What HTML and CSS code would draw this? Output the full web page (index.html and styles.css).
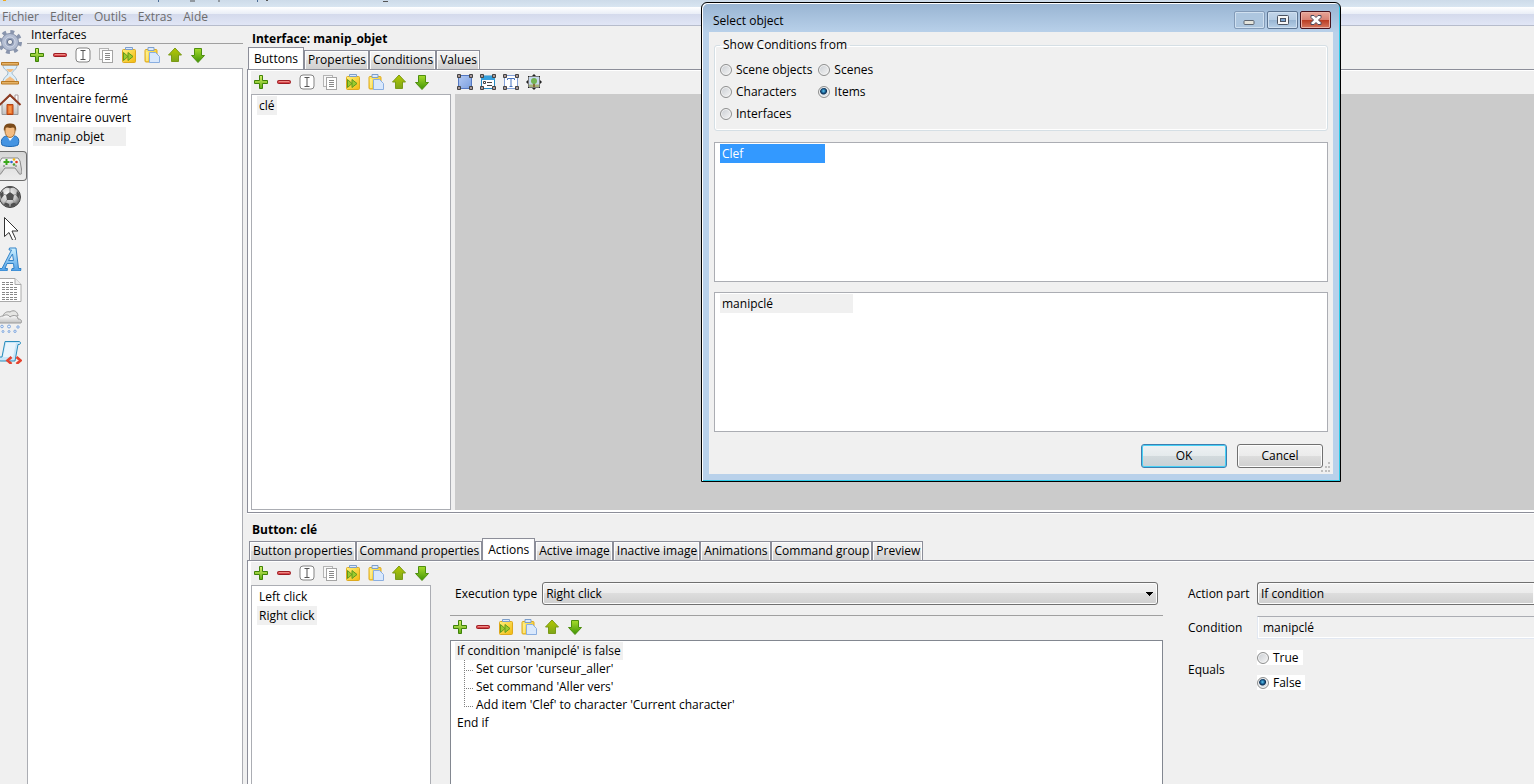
FILE: index.html
```html
<!DOCTYPE html>
<html lang="fr">
<head>
    <meta charset="utf-8">
    <title>Interfaces</title>
    <link rel="stylesheet" href="styles.css">
</head>
<body>
    <!-- Icon shapes shared by the toolbars -->
    <svg class="defs" width="0" height="0" aria-hidden="true">
        <defs>
            <linearGradient id="gGreen" x1="0" y1="0" x2="0" y2="1"><stop offset="0" stop-color="#d6f06a"/><stop offset="1" stop-color="#5fae10"/></linearGradient>
            <linearGradient id="gUp" x1="0" y1="0" x2="0" y2="1"><stop offset="0" stop-color="#b5c800"/><stop offset="1" stop-color="#7da61a"/></linearGradient>
            <linearGradient id="gDown" x1="0" y1="0" x2="0" y2="1"><stop offset="0" stop-color="#a6dc2c"/><stop offset="1" stop-color="#3f9304"/></linearGradient>
            <linearGradient id="gYellow" x1="0" y1="0" x2="1" y2="1"><stop offset="0" stop-color="#fff07a"/><stop offset="1" stop-color="#f2b90e"/></linearGradient>
            <linearGradient id="gBlue" x1="0" y1="0" x2="1" y2="1"><stop offset="0" stop-color="#b3caf4"/><stop offset="1" stop-color="#7b9fdf"/></linearGradient>
            <linearGradient id="gSky" x1="0" y1="0" x2="0" y2="1"><stop offset="0" stop-color="#d0f2ff"/><stop offset="1" stop-color="#4fa0e8"/></linearGradient>
            <linearGradient id="gGrey" x1="0" y1="0" x2="0" y2="1"><stop offset="0" stop-color="#ffffff"/><stop offset="1" stop-color="#c2c2c2"/></linearGradient>
            <radialGradient id="gBall" cx=".4" cy=".35" r=".7"><stop offset="0" stop-color="#ffffff"/><stop offset=".6" stop-color="#c4c4c4"/><stop offset="1" stop-color="#555"/></radialGradient>
        </defs>
        <symbol id="add" viewBox="0 0 16 16"><path d="M6.5 1.5h3v5h5v3h-5v5h-3v-5h-5v-3h5z" fill="url(#gGreen)" stroke="#3f8208" stroke-linejoin="round"/></symbol>
        <symbol id="remove" viewBox="0 0 16 16"><rect x="1.5" y="6.5" width="13" height="3" rx="1" fill="#d8474c" stroke="#9c1c22"/><path d="M3 7.5h10" stroke="#ee8a84"/></symbol>
        <symbol id="rename" viewBox="0 0 16 16"><rect x="1" y="1" width="14" height="14" rx="3" fill="#fff" stroke="#838383"/><path d="M5.5 3.5h5M5.5 12.5h5M8 3.5v9" stroke="#555" fill="none"/></symbol>
        <symbol id="copy" viewBox="0 0 16 16"><rect x="1.5" y="1.5" width="9" height="11" fill="#f8f8f8" stroke="#b4b4b4"/><rect x="4.5" y="3.5" width="10" height="12" fill="#fff" stroke="#a4a4a4"/><path d="M7 6.5h5M7 8.5h5M7 10.5h5M7 12.5h5" stroke="#888"/></symbol>
        <symbol id="duplicate" viewBox="0 0 16 16"><rect x="1.5" y="2.5" width="13" height="13" rx="1" fill="url(#gYellow)" stroke="#dda91e"/><path d="M4.5 2.5v-2h7v2z" fill="#dce9fb" stroke="#7d9fcb"/><path d="M2.5 5.5l4.500 4-4.500 4zM7 5.5l5 4-5 4z" fill="#9ccb2d" stroke="#5f9a1c"/></symbol>
        <symbol id="paste" viewBox="0 0 16 16"><rect x="1" y="2.5" width="12" height="12.5" rx="1" fill="url(#gYellow)" stroke="#dda91e"/><path d="M4 3.5v-3h6v3z" fill="#dce9fb" stroke="#7d9fcb"/><path d="M5.5 5.5h6l4 4v6h-10z" fill="#d9e8fc" stroke="#8aaee0"/><path d="M3 5v9" stroke="#fff6b4"/></symbol>
        <symbol id="up" viewBox="0 0 16 16"><path d="M8 1l6.500 7h-3v6.500h-7V8h-3z" fill="url(#gUp)" stroke="#7b9a16" stroke-linejoin="round"/></symbol>
        <symbol id="down" viewBox="0 0 16 16"><path d="M8 15.5L1.500 8.500h3v-7h7v7h3z" fill="url(#gDown)" stroke="#4f8f10" stroke-linejoin="round"/></symbol>
        <symbol id="handles" viewBox="0 0 16 16"><path d="M.5.5h3v3h-3zM12.500.5h3v3h-3zM.5 12.500h3v3h-3zM12.500 12.500h3v3h-3z" fill="#a99" stroke="#444"/></symbol>
        <symbol id="box" viewBox="0 0 16 16"><rect x="1.5" y="1.5" width="13" height="13" fill="url(#gBlue)" stroke="#5478c2"/><use href="#handles"/></symbol>
        <symbol id="form" viewBox="0 0 16 16"><rect x="1.5" y="2" width="13" height="12.5" fill="#fff" stroke="#248bc4"/><path d="M1 2h14v4H1z" fill="#35a0dd"/><path d="M3.500 7.500h2v2h-2zM7 8.500h5M7 11.500h5" stroke="#444" fill="none"/><use href="#handles"/></symbol>
        <symbol id="textbox" viewBox="0 0 16 16"><rect x="1.5" y="1.5" width="13" height="13" fill="#fff" stroke="#82a0d8"/><path d="M4.500 6V4.500h7V6M8 4.500v7.500M6.500 12.500h3" stroke="#4773c0" fill="none"/><use href="#handles"/></symbol>
        <symbol id="picture" viewBox="0 0 16 16"><rect x="2.5" y="2.5" width="11" height="11" fill="#c6d8ee" stroke="#777"/><path d="M3 10.500h10V13H3z" fill="#a8b47c"/><path d="M7 9h2v4H7z" fill="#8a6c3c"/><circle cx="8" cy="7" r="3" fill="#74b453"/><path d="M8 0l2 2H6zM8 16l2-2H6zM0 8l2-2v4zM16 8l-2-2v4zM2 2h1v1H2zM13 2h1v1h-1zM2 13h1v1H2zM13 13h1v1h-1z" fill="#222"/></symbol>

        <symbol id="gear" viewBox="0 0 24 24"><circle cx="12" cy="12" r="10" fill="none" stroke="#8995ad" stroke-width="4" stroke-dasharray="3.800 4.054"/><circle cx="12" cy="12" r="8.500" fill="#b3bdd2" stroke="#8490a9"/><circle cx="12" cy="12" r="5" fill="#96a2bc" stroke="#d4dbe8"/><circle cx="12" cy="12" r="2.600" fill="#f0f0f0" stroke="#65728c"/></symbol>
        <symbol id="hourglass" viewBox="0 0 24 24"><path d="M5 4h14c0 5-5 6-5 8s5 4 5 9H5c0-5 5-6 5-9S5 9 5 4z" fill="#dceefa" stroke="#9ab4c6"/><path d="M8 8h8l-3 3h-2zM7 20c1-3 4-3 5-5 1 2 4 2 5 5z" fill="#f3bd82"/><path d="M3.500 1.500h17v2.500h-17zM3.500 20.500h17v2.500h-17z" fill="#e5b368" stroke="#b87924"/></symbol>
        <symbol id="house" viewBox="0 0 24 24"><path d="M17 3h3v7h-3z" fill="#fff" stroke="#a99"/><path d="M4 11l8-7 8 7v11.500H4z" fill="url(#gGrey)" stroke="#999"/><path d="M1.500 13L12 3l10.500 10" fill="none" stroke="#8d3c23" stroke-width="2"/><path d="M9 12.500h6v10H9z" fill="#e66a24" stroke="#b34414"/><path d="M10.500 14h3v7h-3z" fill="#f5944a"/></symbol>
        <symbol id="person" viewBox="0 0 24 24"><path d="M4 22c-2-5 1-9 5-9h7c4 0 6 4 4 9-4 2-12 2-16 0z" fill="#4594e2" stroke="#1f68b2"/><path d="M9 13l3 5 4-5z" fill="#f4f8fd"/><ellipse cx="12" cy="8" rx="5" ry="6.500" fill="#f4bc82" stroke="#a87438"/><path d="M6 8C5 3 8 0 12 .5c5-.5 7 3 6 8-1-2-1-4-3-4-3 1-6 0-7 0-1 1-1 2-2 4z" fill="#7b4b1b"/></symbol>
        <symbol id="gamepad" viewBox="0 0 24 24"><path d="M4 4h16l2 3 2 11c0 3-3 3-4 0l-3-4H7l-3 4c-1 3-4 3-4 0L2 7z" fill="url(#gGrey)" stroke="#888"/><path d="M8.500 5v6M5.500 8h6" stroke="#3aa81b" stroke-width="2"/><circle cx="16" cy="5.500" r="1.300" fill="#f0b311"/><circle cx="16" cy="10.500" r="1.300" fill="#4c9f2c"/><circle cx="13.500" cy="8" r="1.300" fill="#2c65d2"/><circle cx="18.500" cy="8" r="1.300" fill="#e2321e"/><path d="M5 12h2M17 12h2" stroke="#666"/></symbol>
        <symbol id="ball" viewBox="0 0 24 24"><circle cx="12" cy="12" r="10.500" fill="url(#gBall)" stroke="#444"/><path d="M8 10l4-3 4 3-1 5H9zM8 2l4 1.500L16 2c-2-1-6-1-8 0zM2 9l3-3 1 4-3 4zM22 9l-3-3-1 4 3 4zM6 20l1-3 4 2v3zM18 20l-1-3-4 2v3z" fill="#505050"/><path d="M12 3v4M8 10l-3-1M16 10l3-1M9 15l-2 3M15 15l2 3" stroke="#999" fill="none"/></symbol>
        <symbol id="cursor" viewBox="0 0 24 24"><path d="M6.500 1.500v19l4.500-4 3.500 7.500c1.500 1 3.500 0 3-1.500L14 15h6z" fill="#fff" stroke="#333"/></symbol>
        <symbol id="letter" viewBox="0 0 24 24"><path d="M1 24l.5-2.500H4L13.500 3H11l.5-2H18l2.500 20.500H23l-.5 2.500h-9l.5-2.500h2l-.5-5H9l-2 5h2.500L9 24zM10.500 13.500h5L14.500 7z" fill="url(#gSky)" stroke="#3283c8" fill-rule="evenodd"/></symbol>
        <symbol id="document" viewBox="0 0 24 24"><path d="M1 .5h16l6 6v17H1z" fill="#fff" stroke="#aaa"/><path d="M17 .5v6h6" fill="#eee" stroke="#aaa"/><path d="M4 4.500h11M4 6.500h11M4 9.500h16M4 11.500h16M4 14.500h16M4 16.500h16M4 19.500h16M4 21.500h16" stroke="#888" stroke-dasharray="3 1"/></symbol>
        <symbol id="weather" viewBox="0 0 24 24"><path d="M5 8c0-4 4-6 7-5 4-3 8 0 8 4z" fill="#e6e6e4" stroke="#999"/><path d="M2 14c-3-3-1-7 3-7 3-2 6-1 7 1 4-3 8-1 8 2 4 0 4 3 3 4z" fill="url(#gGrey)" stroke="#999"/><g fill="#e8f2ff" stroke="#7fa6dc"><circle cx="4" cy="17.500" r="1.300"/><circle cx="11" cy="17.500" r="1.500"/><circle cx="20" cy="18" r="1.200"/><circle cx="5" cy="22.500" r="1"/><circle cx="11" cy="22.500" r="1"/><circle cx="17" cy="22.300" r="1.200"/></g></symbol>
        <symbol id="script" viewBox="0 0 24 24"><path d="M7 1.500h14c2 0 2 3 0 3h-1L17 21H3c-3 0-3-2-1-4h2z" fill="#c8e6f8" stroke="#288dbc" stroke-linejoin="round"/><path d="M8 3h10l-3 14H5z" fill="#fff" opacity=".6"/><path d="M13.500 17l-4 3.500 4 3.500M18.500 17l4 3.500-4 3.500" fill="none" stroke="#e5422e" stroke-width="2.600"/></symbol>
    </svg>

    <header class="titlebar">
        <!-- lower part of the caption line -->
        <svg class="caption" width="420" height="7" viewBox="0 0 420 7" aria-hidden="true">
            <path d="M3 0h3v1h-3z" fill="#f0a81c"/>
            <path d="M158.500 0v2M257.500 0v2" stroke="#4b6c96"/>
            <path d="M190 1h5M218 1h2M266 .5h2M383 1.500h5" stroke="#555"/>
        </svg>
    </header>
    <nav class="menubar">
        <button>Fichier</button>
        <button>Editer</button>
        <button>Outils</button>
        <button>Extras</button>
        <button>Aide</button>
    </nav>

    <div class="workspace">
        <nav class="sidebar">
            <button aria-label="Settings"><svg><use href="#gear"/></svg></button>
            <button aria-label="Time"><svg><use href="#hourglass"/></svg></button>
            <button aria-label="Scenes"><svg><use href="#house"/></svg></button>
            <button aria-label="Characters"><svg><use href="#person"/></svg></button>
            <button class="selected" aria-label="Interfaces"><svg><use href="#gamepad"/></svg></button>
            <button aria-label="Items"><svg><use href="#ball"/></svg></button>
            <button aria-label="Cursors"><svg><use href="#cursor"/></svg></button>
            <button aria-label="Fonts"><svg><use href="#letter"/></svg></button>
            <button aria-label="Texts"><svg><use href="#document"/></svg></button>
            <button aria-label="Particles"><svg><use href="#weather"/></svg></button>
            <button aria-label="Scripts"><svg><use href="#script"/></svg></button>
        </nav>

        <aside class="browser">
            <h2>Interfaces</h2>
            <div class="toolbar">
                <button aria-label="Add"><svg><use href="#add"/></svg></button>
                <button aria-label="Remove"><svg><use href="#remove"/></svg></button>
                <button aria-label="Rename"><svg><use href="#rename"/></svg></button>
                <button aria-label="Copy"><svg><use href="#copy"/></svg></button>
                <button aria-label="Duplicate"><svg><use href="#duplicate"/></svg></button>
                <button aria-label="Paste"><svg><use href="#paste"/></svg></button>
                <button aria-label="Up"><svg><use href="#up"/></svg></button>
                <button aria-label="Down"><svg><use href="#down"/></svg></button>
            </div>
            <ul class="list">
                <li>Interface</li>
                <li>Inventaire fermé</li>
                <li>Inventaire ouvert</li>
                <li class="current w-item">manip_objet</li>
            </ul>
        </aside>

        <main class="editor">
            <section class="group group-top">
                <h1>Interface: manip_objet</h1>
                <div class="tabs">
                    <button class="active">Buttons</button>
                    <button>Properties</button>
                    <button>Conditions</button>
                    <button>Values</button>
                </div>
                <div class="pane">
                    <div class="column buttons-list">
                        <div class="toolbar">
                            <button aria-label="Add"><svg><use href="#add"/></svg></button>
                            <button aria-label="Remove"><svg><use href="#remove"/></svg></button>
                            <button aria-label="Rename"><svg><use href="#rename"/></svg></button>
                            <button aria-label="Copy"><svg><use href="#copy"/></svg></button>
                            <button aria-label="Duplicate"><svg><use href="#duplicate"/></svg></button>
                            <button aria-label="Paste"><svg><use href="#paste"/></svg></button>
                            <button aria-label="Up"><svg><use href="#up"/></svg></button>
                            <button aria-label="Down"><svg><use href="#down"/></svg></button>
                        </div>
                        <ul class="list">
                            <li class="current">clé</li>
                        </ul>
                    </div>
                    <div class="column stage">
                        <div class="toolbar">
                            <button aria-label="Area"><svg><use href="#box"/></svg></button>
                            <button aria-label="Actions area"><svg><use href="#form"/></svg></button>
                            <button aria-label="Text area"><svg><use href="#textbox"/></svg></button>
                            <button aria-label="Image area"><svg><use href="#picture"/></svg></button>
                        </div>
                        <div class="canvas"></div>
                    </div>
                </div>
            </section>

            <section class="group group-bottom">
                <h1>Button: clé</h1>
                <div class="tabs inset">
                    <button>Button properties</button>
                    <button>Command properties</button>
                    <button class="active">Actions</button>
                    <button>Active image</button>
                    <button>Inactive image</button>
                    <button>Animations</button>
                    <button>Command group</button>
                    <button>Preview</button>
                </div>
                <div class="pane">
                    <div class="column actions-list">
                        <div class="toolbar">
                            <button aria-label="Add"><svg><use href="#add"/></svg></button>
                            <button aria-label="Remove"><svg><use href="#remove"/></svg></button>
                            <button aria-label="Rename"><svg><use href="#rename"/></svg></button>
                            <button aria-label="Copy"><svg><use href="#copy"/></svg></button>
                            <button aria-label="Duplicate"><svg><use href="#duplicate"/></svg></button>
                            <button aria-label="Paste"><svg><use href="#paste"/></svg></button>
                            <button aria-label="Up"><svg><use href="#up"/></svg></button>
                            <button aria-label="Down"><svg><use href="#down"/></svg></button>
                        </div>
                        <ul class="list">
                            <li>Left click</li>
                            <li class="current">Right click</li>
                        </ul>
                    </div>

                    <div class="column parts">
                        <div class="execution">
                            <label for="execution">Execution type</label>
                            <select id="execution"><option>Right click</option></select>
                        </div>
                        <div class="toolbar">
                            <button aria-label="Add"><svg><use href="#add"/></svg></button>
                            <button aria-label="Remove"><svg><use href="#remove"/></svg></button>
                            <button aria-label="Duplicate"><svg><use href="#duplicate"/></svg></button>
                            <button aria-label="Paste"><svg><use href="#paste"/></svg></button>
                            <button aria-label="Up"><svg><use href="#up"/></svg></button>
                            <button aria-label="Down"><svg><use href="#down"/></svg></button>
                        </div>
                        <ul class="list tree">
                            <li><span class="current">If condition 'manipclé' is false</span>
                                <ul>
                                    <li>Set cursor 'curseur_aller'</li>
                                    <li>Set command 'Aller vers'</li>
                                    <li>Add item 'Clef' to character 'Current character'</li>
                                </ul>
                            </li>
                            <li><span>End if</span></li>
                        </ul>
                    </div>

                    <form class="details">
                        <label for="part">Action part</label>
                        <select id="part"><option>If condition</option></select>
                        <label for="condition">Condition</label>
                        <input type="text" id="condition" value="manipclé" readonly>
                        <span id="equals">Equals</span>
                        <div class="choices" role="radiogroup" aria-labelledby="equals">
                            <label><input type="radio" name="equals"> True</label>
                            <label><input type="radio" name="equals" checked> False</label>
                        </div>
                    </form>
                </div>
            </section>
        </main>
    </div>

    <!-- Select object window -->
    <div class="dialog" role="dialog" aria-labelledby="dialogTitle">
        <div class="dialog-title">
            <span id="dialogTitle">Select object</span>
            <div class="window-buttons">
                <button class="minimize" aria-label="Minimize"><svg width="13" height="9" viewBox="0 0 13 9"><rect x="1" y="4.5" width="10" height="4" rx="1" fill="#e4e4dc" stroke="#5e6672"/></svg></button>
                <button aria-label="Maximize"><svg width="12" height="10" viewBox="0 0 12 10"><rect x=".5" y=".5" width="11" height="9" rx="1" fill="#f6f6f6" stroke="#4a5260"/><rect x="3.5" y="3.5" width="5" height="3" fill="#7ba3d0" stroke="#4a5260"/></svg></button>
                <button class="close" aria-label="Close"><svg width="12" height="10" viewBox="0 0 12 10"><path d="M1 .5h3l2 2 2-2h3v2L8.500 5 11 7.500v2H8l-2-2-2 2H1v-2L3.500 5 1 2.500z" fill="#fff" stroke="#4a4a5c"/></svg></button>
            </div>
        </div>
        <div class="dialog-body">
            <fieldset>
                <legend>Show Conditions from</legend>
                <div class="sources">
                    <label><input type="radio" name="source"> Scene objects</label>
                    <label><input type="radio" name="source"> Scenes</label>
                    <label><input type="radio" name="source"> Characters</label>
                    <label><input type="radio" name="source" checked> Items</label>
                    <label><input type="radio" name="source"> Interfaces</label>
                </div>
            </fieldset>
            <ul class="list">
                <li class="picked">Clef</li>
            </ul>
            <ul class="list">
                <li class="current w-condition">manipclé</li>
            </ul>
            <div class="dialog-actions">
                <button class="default">OK</button>
                <button>Cancel</button>
            </div>
        </div>
        <svg class="grip" width="10" height="10" viewBox="0 0 10 10" aria-hidden="true"><path d="M7 0h2v2H7zM4 4h2v2H4zM7 4h2v2H7zM0 8h2v2H0zM4 8h2v2H4zM7 8h2v2H7z" fill="#bfbfbf"/></svg>
    </div>
</body>
</html>
```
FILE: styles.css
```css
* {
    box-sizing: border-box;
}

body {
    margin: 0;
    height: 100vh;
    overflow: hidden;
    display: flex;
    flex-direction: column;
    position: relative;
    background-color: #f0f0f0;
    color: #000;
    font: 12px/16px "Open Sans", "Noto Sans", sans-serif;
}

button, input, select {
    font: inherit;
    color: inherit;
    margin: 0;
}

button {
    padding: 0;
    border: none;
    background: none;
}

svg {
    display: block;
}

.defs {
    position: absolute;
}

h1, h2 {
    margin: 0;
    font-size: 12px;
    line-height: 18px;
}

/* top bars */
.titlebar {
    height: 7px;
    flex: none;
    background: linear-gradient(#cddbe9, #d8e5f1);
}

.menubar {
    flex: none;
    height: 19px;
    display: flex;
    gap: 11px;
    padding: 0 2px;
    background: linear-gradient(#fff, #e9eef7 7px, #d4daec 7px, #e1e6f6);
    border-bottom: 1px solid #b6bccc;
    color: #6d6d6d;
    line-height: 20px;
}

.workspace {
    flex: 1;
    min-height: 0;
    display: flex;
}

/* left icon bar */
.sidebar {
    flex: none;
    width: 27px;
    overflow: hidden;
}

    .sidebar button {
        display: flex;
        align-items: center;
        width: 27px;
        height: 31px;
    }

    .sidebar svg {
        width: 24px;
        height: 24px;
        margin-left: -2px;
    }

    .sidebar .selected {
        height: 30px;
        margin: 1px 0 0;
        border: 1px solid #6d6d6d;
        border-left: none;
        border-radius: 0 4px 4px 0;
        background: linear-gradient(#d6d6d6, #ececec);
    }

/* lists and toolbars */
.toolbar {
    flex: none;
    display: flex;
    height: 23px;
    margin-left: -2px;
    padding-bottom: 2px;
}

    .toolbar button {
        flex: none;
        width: 23px;
        display: flex;
        align-items: center;
        justify-content: center;
    }

    .toolbar svg {
        width: 16px;
        height: 16px;
    }

.list {
    flex: 1;
    margin: 0;
    padding: 1px 5px;
    list-style: none;
    background-color: #fff;
    border: 1px solid #abadb3;
}

    .list > li {
        width: fit-content;
        height: 19px;
        line-height: 19px;
        padding: 0 2px;
    }

    .list .current {
        background-color: #f0f0f0;
    }

    .list .w-item {
        min-width: 93px;
    }

    .list .w-condition {
        min-width: 133px;
    }

    .list .picked {
        min-width: 105px;
        background-color: #3399ff;
        color: #fff;
    }

.browser {
    flex: none;
    width: 216px;
    display: flex;
    flex-direction: column;
}

    .browser h2 {
        height: 18px;
        padding-left: 4px;
        border-bottom: 1px solid #a0a0a0;
        font-weight: normal;
    }

    .browser .toolbar {
        height: 24px;
    }

    .browser .list {
        border-bottom: none;
    }

/* editor */
.editor {
    flex: 1;
    min-width: 0;
    margin-left: 4px;
    display: flex;
    flex-direction: column;
}

.group {
    display: flex;
    flex-direction: column;
    min-height: 0;
}

.group-top {
    flex: 483 1 0;
    padding-top: 4px;
}

.group-bottom {
    flex: 263 1 0;
    padding-top: 8px;
}

.group h1 {
    padding-left: 5px;
}

.tabs {
    display: flex;
    align-items: flex-end;
    height: 22px;
    margin-bottom: -1px;
    padding-left: 1px;
}

    .tabs button {
        height: 20px;
        padding: 0 2px 0 3px;
        border: 1px solid #8c8e99;
        background: linear-gradient(#f4f4f4, #ececec 50%, #dedede 50%, #d0d0d0);
        box-shadow: inset 1px 1px #fcfcfc, inset -1px 0 #fcfcfc;
        line-height: 18px;
        white-space: nowrap;
    }

    .tabs .active {
        height: 23px;
        padding: 0 5px;
        background: #fff;
        border-bottom: none;
        line-height: 20px;
    }

    .inset {
        padding-left: 2px;
    }

.pane {
    flex: 1;
    min-height: 0;
    display: flex;
    padding: 1px 0 0 3px;
    border: 1px solid #8c8e99;
    border-right: none;
    box-shadow: inset 3px 1px #fff;
}

.group-top .pane {
    padding-bottom: 2px;
    box-shadow: inset 3px 1px #fff, inset 0 -2px #fff, 0 1px #fff;
}

.group-bottom .pane {
    border-bottom: none;
}

.column {
    display: flex;
    flex-direction: column;
    min-width: 0;
}

.buttons-list {
    flex: 0 0 200px;
}

.stage {
    flex: 1;
    margin-left: 4px;
}

.canvas {
    flex: 1;
    background-color: #cbcbcb;
}

.actions-list {
    flex: 0 0 180px;
}

    .actions-list .list {
        border-bottom: none;
    }

.parts {
    flex: 1;
    margin-left: 19px;
}

.execution {
    display: flex;
    align-items: center;
    gap: 5px;
    height: 54px;
    padding: 15px 5px 5px;
    border-bottom: 1px solid #a0a0a0;
}

    .execution select {
        flex: 1;
    }

select {
    appearance: none;
    height: 23px;
    padding: 0 3px;
    border: 1px solid #707070;
    border-radius: 3px;
    background: linear-gradient(#f2f2f2, #ebebeb 50%, #dddddd 50%, #cfcfcf);
    box-shadow: inset 0 0 0 1px #fcfcfc;
}

/* select with its drop-down arrow */
.execution select {
    background: linear-gradient(#000, #000) right 4px top 9px / 7px 1px no-repeat,
                linear-gradient(#000, #000) right 5px top 10px / 5px 1px no-repeat,
                linear-gradient(#000, #000) right 6px top 11px / 3px 1px no-repeat,
                linear-gradient(#000, #000) right 7px top 12px / 1px 1px no-repeat,
                linear-gradient(#f2f2f2, #ebebeb 50%, #dddddd 50%, #cfcfcf);
}

.parts .toolbar {
    height: 24px;
}

.tree {
    border-color: #828790;
    border-bottom: none;
    padding: 1px 4px;
}

    .tree > li {
        height: auto;
        padding: 0;
        line-height: 18px;
    }

    .tree span {
        display: block;
        width: fit-content;
        padding: 0 2px;
    }

    .tree ul {
        margin: 0;
        padding: 0 0 0 9px;
        list-style: none;
    }

    .tree ul li {
        display: flex;
        gap: 3px;
    }

    /* dotted branch lines */
    .tree ul li::before {
        content: "";
        width: 9px;
        height: 18px;
        background: repeating-linear-gradient(#808080 0 1px, transparent 1px 2px) 0 0 / 1px 100% no-repeat,
                    repeating-linear-gradient(90deg, #808080 0 1px, transparent 1px 2px) 0 10px / 100% 1px no-repeat;
    }

    .tree ul li:last-child::before {
        background-size: 1px 10px, 100% 1px;
    }

.details {
    flex: 0 0 371px;
    display: grid;
    grid-template-columns: 60px 1fr;
    grid-template-rows: 23px 23px auto;
    gap: 11px 9px;
    align-content: start;
    align-items: center;
    padding: 20px 0 0 25px;
    overflow: hidden;
}

    .details label, .details span {
        white-space: nowrap;
    }

    .details select {
        border-right: none;
        border-radius: 3px 0 0 3px;
    }

    .details input[type=text] {
        height: 23px;
        padding: 0 5px;
        border: 1px solid #e2e8f2;
        border-top-color: #abadb3;
        border-right: none;
        background-color: #f0f0f0;
        box-shadow: inset 1px 0 #fff, inset 0 -1px #fff;
    }

.choices {
    display: flex;
    flex-direction: column;
    align-items: flex-start;
    gap: 10px;
}

    .choices label {
        display: flex;
        align-items: center;
        gap: 4px;
        height: 15px;
        padding-right: 4px;
        background-color: #fff;
    }

input[type=radio] {
    appearance: none;
    width: 12px;
    height: 12px;
    border: 1px solid #8e8f8f;
    border-radius: 50%;
    background: linear-gradient(135deg, #c9cdd2, #f6f6f6);
    box-shadow: inset 0 0 0 1px #f4f4f4;
}

    input[type=radio]:checked {
        background: radial-gradient(circle at 45% 40%, #5ccaf0 0, #1a5f94 2px, #0d2e50 3px, #dde3e8 4px);
    }

/* dialog */
.dialog {
    position: absolute;
    top: 2px;
    left: 701px;
    width: 640px;
    display: flex;
    flex-direction: column;
    padding: 0 7px 7px 7px;
    border: 1px solid #000;
    border-radius: 6px 6px 0 0;
    background: linear-gradient(#98b4d2, #b9d1ea 30px);
    box-shadow: inset 1px 1px #fff, inset -1px -1px #2bcbe8;
}

.dialog-title {
    height: 29px;
    display: flex;
    justify-content: space-between;
    padding: 8px 2px 0 4px;
    line-height: 20px;
}

.window-buttons {
    display: flex;
    gap: 2px;
}

    .window-buttons button {
        width: 31px;
        height: 18px;
        display: flex;
        align-items: center;
        justify-content: center;
        border: 1px solid #5d7592;
        border-radius: 2px;
        background: linear-gradient(#c2d5e9, #b4cbe2 50%, #98b5d2 50%, #b7d0e8);
        box-shadow: inset 0 0 0 1px #d0e0f0;
    }

    .window-buttons .minimize {
        border-color: #839bb8;
        background: #adc6df;
    }

    .window-buttons .close {
        border-color: #48121c;
        background: linear-gradient(#e8a598, #d98274 50%, #b93a20 50%, #d77860);
        box-shadow: inset 0 0 0 1px #eab0a4;
    }

.dialog-body {
    display: flex;
    flex-direction: column;
    padding: 5px 5px 6px;
    background-color: #f0f0f0;
}

.dialog fieldset {
    margin: 0 0 11px;
    padding: 6px 5px 5px;
    height: 94px;
    border: 1px solid #d5dfe5;
    border-radius: 3px;
    box-shadow: inset 0 0 0 1px #fff;
}

.dialog legend {
    padding: 0 3px;
}

.sources {
    display: grid;
    grid-template-columns: max-content max-content;
    gap: 0 6px;
    line-height: 22px;
}

    .sources label {
        display: flex;
        align-items: center;
        gap: 4px;
    }

.dialog .list {
    flex: none;
    height: 140px;
    margin-bottom: 10px;
}

.dialog-actions {
    display: flex;
    justify-content: flex-end;
    gap: 10px;
    padding: 2px 5px 0 0;
}

    .dialog-actions button {
        width: 86px;
        height: 24px;
        border: 1px solid #707070;
        border-radius: 3px;
        background: linear-gradient(#f2f2f2, #ebebeb 50%, #dddddd 50%, #cfcfcf);
        box-shadow: inset 0 0 0 1px #fcfcfc;
    }

    .dialog-actions .default {
        border-color: #3c7fb1;
        background: linear-gradient(#eef2f4, #e4eaec 50%, #d2dadd 50%, #c8d1d5);
        box-shadow: inset 0 0 0 1px #48d0f5;
    }

.grip {
    position: absolute;
    right: 9px;
    bottom: 9px;
}
```
